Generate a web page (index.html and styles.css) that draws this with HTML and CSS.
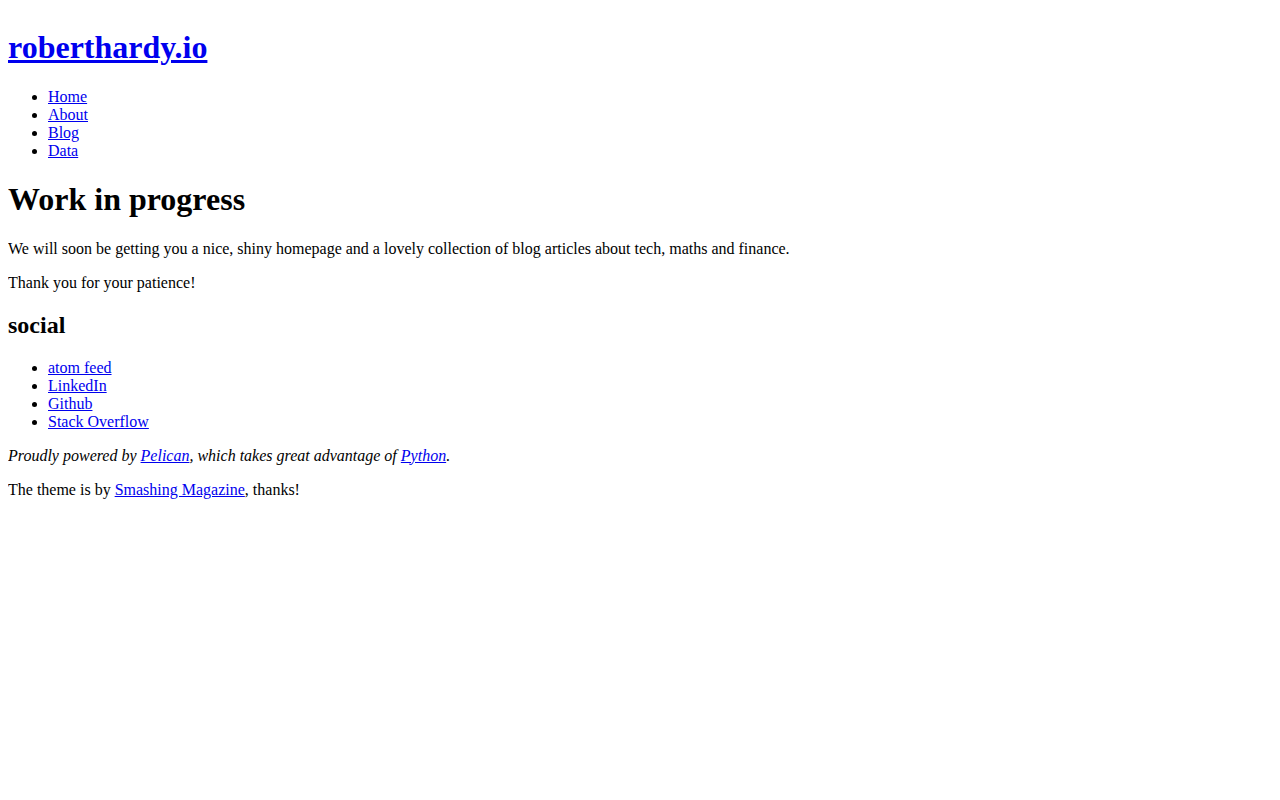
FILE: index.html
```html
<!DOCTYPE html>
<html>
<head>
<meta charset="utf-8">
<title>roberthardy.io</title>
<link rel="stylesheet" href="styles.css">
</head>
<body>
<header>
<h1><a href="#">roberthardy.io</a></h1>
<nav><ul>
<li><a href="#">Home</a></li>
<li><a href="#">About</a></li>
<li><a href="#">Blog</a></li>
<li><a href="#">Data</a></li>
</ul></nav>
</header>
<div class="content">
<h1>Work in progress</h1>
<p>We will soon be getting you a nice, shiny homepage and a lovely collection of blog articles about tech, maths and finance.</p>
<p>Thank you for your patience!</p>
</div>
<div class="social">
<h2>social</h2>
<ul>
<li><a href="#">atom feed</a></li>
<li><a href="#">LinkedIn</a></li>
<li><a href="#">Github</a></li>
<li><a href="#">Stack Overflow</a></li>
</ul>
</div>
<footer>
<address>Proudly powered by <a href="#">Pelican</a>, which takes great advantage of <a href="#">Python</a>.</address>
<p>The theme is by <a href="#">Smashing Magazine</a>, thanks!</p>
</footer>
</body>
</html>
```
FILE: styles.css
```css
body {
  font-family: "Liberation Serif", "Times New Roman", serif;
}
```
